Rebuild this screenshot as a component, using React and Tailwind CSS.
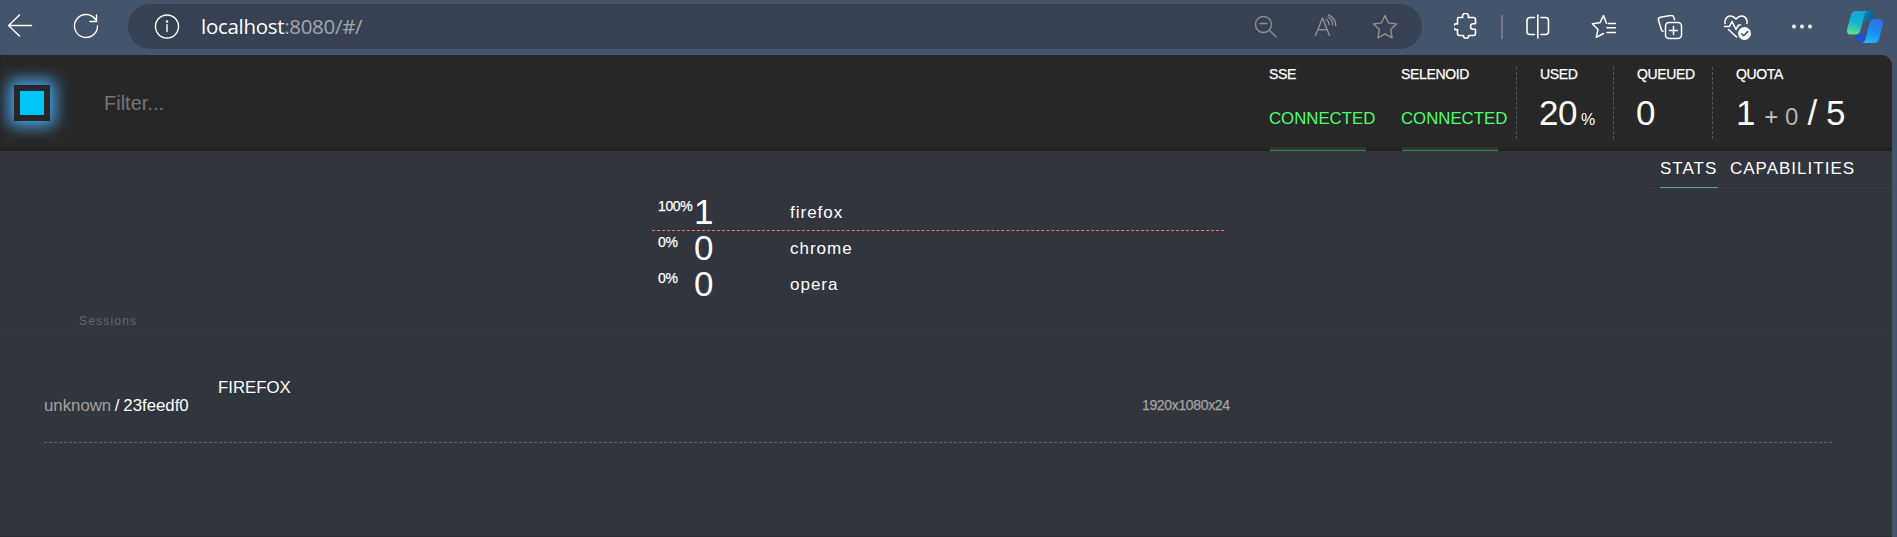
import React from "react";

const ui = "font-['Liberation_Sans',Arial,sans-serif]";

function Icon({ className = "", w = 24, h = 24, vb, children, sw = 1.4 }) {
  return (
    <svg
      className={"block shrink-0 " + className}
      width={w}
      height={h}
      viewBox={vb || `0 0 ${w} ${h}`}
      fill="none"
      stroke="currentColor"
      strokeWidth={sw}
      strokeLinecap="round"
      strokeLinejoin="round"
    >
      {children}
    </svg>
  );
}

function Copilot() {
  return (
    <svg className="ml-[33px] block shrink-0" width="38" height="34" viewBox="0 0 38 34">
      <defs>
        <linearGradient id="cpA" x1="0.6" y1="0" x2="0.3" y2="1">
          <stop offset="0" stopColor="#0fa3dc" />
          <stop offset="0.5" stopColor="#14b4cf" />
          <stop offset="1" stopColor="#5fe08f" />
        </linearGradient>
        <linearGradient id="cpB" x1="0.6" y1="0" x2="0.3" y2="1">
          <stop offset="0" stopColor="#2f73dd" />
          <stop offset="0.5" stopColor="#1b8ef5" />
          <stop offset="1" stopColor="#25b8f4" />
        </linearGradient>
        <linearGradient id="cpC" x1="0" y1="0" x2="1" y2="0.4">
          <stop offset="0" stopColor="#0b86b8" />
          <stop offset="1" stopColor="#0c5f93" />
        </linearGradient>
      </defs>
      <path d="M19 1h4.500c2.300 0 3.200 1.500 3.900 3.800L28.500 9h-4.300c-2.500 0-3.800 1.200-4.400 3.300L17 11z" fill="url(#cpC)" />
      <path d="M10 24.500h5.500c1.500 0 2.700-.8 3.300-2.300L21 20l-2.300 9c-.7 2.400-1.500 4-3.700 4-2.300 0-3.300-1.500-4-4z" fill="#1d4fd8" />
      <path d="M9.500 1H23c-2.500 0-3.800 1.500-4.600 4l-4 15.500c-.7 2.500-2 4-4.500 4H4.500C1.500 24.500.500 22 1.200 19L4.800 5.500C5.700 2.500 7 1 9.500 1z" fill="url(#cpA)" />
      <path d="M28.500 33H15c2.500 0 3.800-1.500 4.600-4l4-16c.7-2.500 2-4 4.500-4h5.400c3 0 4 2.500 3.300 5.500L33.200 28.500c-.9 3-2.200 4.500-4.700 4.500z" fill="url(#cpB)" />
    </svg>
  );
}

function Toolbar() {
  return (
    <div className="flex h-[55px] items-start bg-[#44546a] text-white">
      <Icon className="ml-[7px] mt-[13px]" w={26} h={26}>
        <path d="M24.500 12.500H1.500M12.500 2 1.500 12.500l11 10.500" />
      </Icon>
      <Icon className="ml-[40px] mt-[13px]" w={26} h={27}>
        <path d="M22.500 6.500A11.500 11.500 0 1 0 24.500 13M23.500 2v6.500h-6.500" />
      </Icon>
      <div className="ml-[29px] mt-1 flex h-[45px] w-[1294px] items-start rounded-full bg-[#364253]">
        <Icon className="ml-[26px] mt-[9px]" w={26} h={27}>
          <circle cx="13" cy="13.500" r="11.500" />
          <path d="M13 11.800v6.700" />
          <circle cx="13" cy="8.500" r=".6" fill="currentColor" />
        </Icon>
        <div className="ml-[21px] w-[300px] whitespace-nowrap font-['Open_Sans','Noto_Sans',sans-serif] text-[20.5px] leading-[45px] tracking-[-0.3px]">
          localhost<span className="text-[#a3a6aa]">:8080/#/</span>
        </div>
        <div className="ml-auto mr-[24px] flex text-[#8f9091]">
          <Icon className="mt-[11px]" w={24} h={24}>
            <circle cx="9.500" cy="9.500" r="8" />
            <path d="M15.500 15.500l6.500 6.200M6 8.500h7" />
          </Icon>
          <Icon className="ml-[35px] mt-[9px]" w={26} h={25}>
            <path d="M2.500 22.500 9.500 5l7 17.500M5 16.800h9M13 6.500c1.800 1 3 2.800 3.200 5M15.500 1.800c4.200 1.800 7.200 6 7.300 11M15 4.200c2.700 1.200 4.500 4 4.700 7.500" />
          </Icon>
          <Icon className="ml-[33px] mt-[10px]" w={26} h={26}>
            <path d="M13 1.500l3.500 7.400 8 1.100-5.900 5.600 1.500 8.200L13 19.800l-7.100 4 1.500-8.200L1.500 10l8-1.100z" />
          </Icon>
        </div>
      </div>
      <Icon className="ml-[32px] mt-[13px]" w={24} h={27} sw={1.6}>
        <path d="M4.500 4.500h4.300a3 3 0 1 1 5.400 0h5.300a2 2 0 0 1 2 2v4.300h-2.300a2.700 2.700 0 0 0 0 5.400h2.300v4.300a2 2 0 0 1-2 2h-4.700a2.700 2.700 0 1 1-5.400 0H5.500a2 2 0 0 1-2-2v-4a3 3 0 1 1 0-5.500V6.500a2 2 0 0 1 1-2z" />
      </Icon>
      <div className="ml-[23px] mt-[15px] h-6 w-[2px] bg-[#6f7b8c]" />
      <Icon className="ml-[22px] mt-[13px]" w={26} h={27} sw={1.6}>
        <path d="M12.800 2v23M9.500 4.500H5a3 3 0 0 0-3 3v11a3 3 0 0 0 3 3h4.500M16 4.500h4.500a3 3 0 0 1 3 3v11a3 3 0 0 1-3 3H16" />
      </Icon>
      <Icon className="ml-[40px] mt-[14px]" w={26} h={26} sw={1.5}>
        <path d="M15.500 9.300 12.500 1.500 9 8.700l-7.700 1.100L7 15.500 5.300 23.300l7.200-3.800M17.500 9.500h7M16 13.800h8.500M16 18.500h8.500" />
      </Icon>
      <Icon className="ml-[40px] mt-[14px]" w={26} h={26} sw={1.5}>
        <rect x="8.500" y="8.500" width="16" height="16" rx="3.500" />
        <path d="M16.500 12.500v8M12.500 16.500h8M17.500 5.500l-.5-1.800A2.800 2.800 0 0 0 13.500 1.500L3.300 3.200A2.500 2.500 0 0 0 1.500 6.200l2.800 9.300c.3 1 .9 1.500 1.700 1.700" />
      </Icon>
      <Icon className="ml-[40px] mt-[14px]" w={29} h={27} sw={1.6}>
        <path d="M2 9.500C1.500 5 4 2 7.500 2c2.200 0 4 1.200 5.500 3 1.500-1.800 3.300-3 5.500-3 3.700 0 6 3 5.500 7.500M1.500 12.500h5l2.500-5 4 8 2.500-4.500h2M5.500 15.500l8 7.500" />
        <circle cx="21.500" cy="19.500" r="6.500" fill="white" stroke="none" />
        <path d="M18.700 19.800l2 2 4-4.200" stroke="#44546a" />
      </Icon>
      <Icon className="ml-[39px] mt-[23px]" w={22} h={7}>
        <g fill="currentColor" stroke="none">
          <circle cx="3" cy="3.500" r="2" />
          <circle cx="11" cy="3.500" r="2" />
          <circle cx="19" cy="3.500" r="2" />
        </g>
      </Icon>
      <div className="mt-[10px]">
        <Copilot />
      </div>
    </div>
  );
}

const label = "text-[14px] leading-[18px] tracking-[-0.35px] [-webkit-text-stroke:0.25px_currentColor]";

function Status({ name }) {
  return (
    <div className="flex w-24 flex-col whitespace-nowrap border-b border-[#3a7a46] bg-[linear-gradient(to_top,#2d4a32,#272727_4px)]">
      <div className={"-ml-px mt-[10px] " + label}>{name}</div>
      <div className="-ml-px mt-[26px] text-[16.8px] leading-5 text-[#4dff6a]">CONNECTED</div>
    </div>
  );
}

function Metric({ name, className, children }) {
  return (
    <div className={"mt-3 h-[72px] whitespace-nowrap border-l border-dashed border-[#555a62] pl-[23px] " + className}>
      <div className={"-mt-0.5 " + label}>{name}</div>
      <div className="-ml-px mt-[10px] text-[35px] leading-10 tracking-[-0.5px]">{children}</div>
    </div>
  );
}

function Header() {
  return (
    <div className="flex h-24 rounded-tr-[11px] bg-[#272727] shadow-[inset_0_-4px_4px_-2px_#1f1f20]">
      <div className="ml-[14px] mt-[30px] h-9 w-9 border-[6px] border-[#272727] bg-[#00c6f7] shadow-[0_0_16px_5px_#4aa8ee]" />
      <div className="mt-[14px] h-px w-[5px] self-center bg-[#3f5fc4]" />
      <div className="ml-[49px] mt-[36px] text-xl leading-6 text-[#757575]">Filter...</div>
      <div className="ml-auto mr-[36px] flex">
        <div className="flex gap-9">
          <Status name="SSE" />
          <Status name="SELENOID" />
        </div>
        <Metric name="USED" className="ml-[18px] w-[97px]">
          20<span className="ml-1 text-base">%</span>
        </Metric>
        <Metric name="QUEUED" className="w-[99px]">0</Metric>
        <Metric name="QUOTA" className="w-[144px]">
          <span className="ml-px">1</span>{" "}
          <span className="text-2xl tracking-normal text-[#c4c4c4]">+ <span className="text-[#b4b4b4]">0</span></span> / 5
        </Metric>
      </div>
    </div>
  );
}

function Tabs() {
  return (
    <div className="ml-auto flex h-[38px] w-[244px] border-b border-[#373b43] pl-3 text-[17px] tracking-[1px]">
      <div className="h-[37px] w-[58px] border-b border-[#4fa97a] pt-2 leading-5">STATS</div>
      <div className="ml-3 pt-2 leading-5">CAPABILITIES</div>
    </div>
  );
}

const browsers = [
  { name: "firefox", count: 1, share: "100%", line: "border-[#f4776b]" },
  { name: "chrome", count: 0, share: "0%", line: "border-transparent" },
  { name: "opera", count: 0, share: "0%", line: "border-transparent" },
];

function Stats() {
  return (
    <div className="ml-[652px] mt-[6px] w-[572px]">
      {browsers.map((b) => (
        <div key={b.name} className={"flex h-9 border-b border-dashed pl-[6px] " + b.line}>
          <div className={"mt-0.5 w-[35px] " + label}>{b.share}</div>
          <div className="-mt-[3px] w-[97px] pl-px text-[35px] leading-10">{b.count}</div>
          <div className="mt-2 text-[17px] leading-5 tracking-[1px]">{b.name}</div>
        </div>
      ))}
    </div>
  );
}

function Sessions() {
  return (
    <>
      <div className="mt-[9px] h-[22px] border-b border-[#363a42] pl-[79px] pt-px text-xs leading-4 tracking-[1.2px] text-[#686868]">Sessions</div>
      <div className="ml-11 flex h-[109px] w-[1788px] whitespace-nowrap border-b border-dashed border-[#61656c] text-[16.8px] leading-5">
        <div className="mt-[62px] w-[174px]">
          <span className="text-[#a0a0a0]">unknown</span>
          <span className="ml-[3.500px] mr-[4px]">/</span>23feedf0
        </div>
        <div className="mt-[44px] w-[924px]">FIREFOX</div>
        <div className={"mt-[62px] text-[#a4a4a4] " + label}>1920x1080x24</div>
      </div>
    </>
  );
}

export default function App() {
  return (
    <div className={"h-[537px] w-[1897px] overflow-hidden bg-[#44546a] text-white " + ui}>
      <Toolbar />
      <div className="flex h-[482px] w-[1892px] flex-col rounded-tr-[11px] border-b border-[#2b2e35] bg-[#31353d]">
        <Header />
        <Tabs />
        <Stats />
        <Sessions />
      </div>
    </div>
  );
}
